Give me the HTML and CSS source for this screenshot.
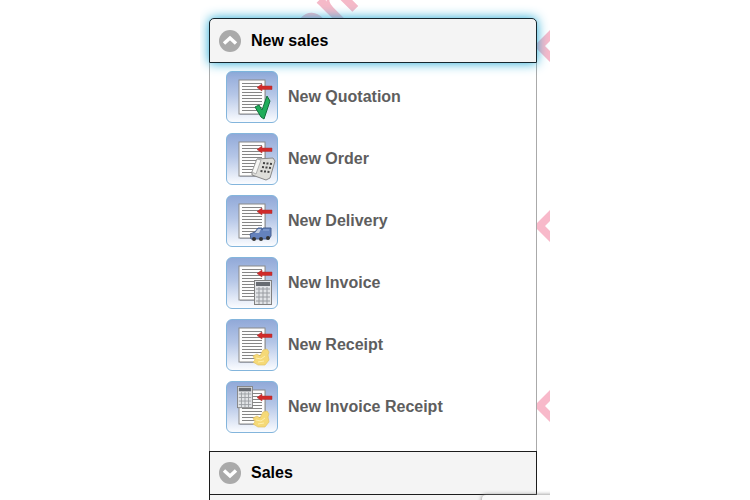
FILE: index.html
```html
<!DOCTYPE html>
<html lang="en">
  <head>
    <meta charset="UTF-8" />
    <meta name="viewport" content="width=device-width, initial-scale=1.0" />
    <title>New sales</title>
    <link rel="stylesheet" href="styles.css">
  </head>
  <body>
    <!-- shared icon parts -->
    <svg class="defs" aria-hidden="true">
      <defs>
        <symbol id="page" viewBox="0 0 50 50">
          <rect x="13" y="9" width="26" height="34" fill="#a9b3c6" />
          <rect x="12" y="8" width="26" height="34" fill="#fdfdfd" stroke="#8a8a8a" stroke-width="1" />
          <path d="M15 11.500H35M15 14.500H35M15 17.500H35M15 20.500H35M15 23.500H35M15 26.500H35M15 29.500H35M15 32.500H35M15 35.500H35M15 38.500H35" stroke="#858585" stroke-width="1" />
        </symbol>
        <symbol id="arrow" viewBox="0 0 50 50">
          <path d="M30 15.500L35 12V14H45V17.500H35V19Z" fill="#d12a2a" stroke="#a33" stroke-width=".5" />
        </symbol>
        <symbol id="calc" viewBox="0 0 18 26">
          <rect x=".5" y=".5" width="17" height="24" fill="#e2e4e7" stroke="#808080" />
          <rect x="2" y="2" width="14" height="4" fill="#686c72" />
          <path d="M2 9H16M2 13H16M2 17H16M2 21H16M5 7V24M9 7V24M13 7V24" stroke="#999ca1" stroke-width="1" />
        </symbol>
        <symbol id="hand" viewBox="0 0 18 18">
          <path d="M1 8L5 6L8 8L11 2L15 1L17 4L16 7L17 12L13 17H6L1 14L3 12Z" fill="#f5d977" stroke="#e4c468" stroke-width=".7" />
          <path d="M4 10L9 11L13 8M6 14L12 13" fill="none" stroke="#fff0ae" stroke-width="1" />
        </symbol>
      </defs>
    </svg>

    <div class="page">
      <span class="watermark" aria-hidden="true">om</span>
      <svg class="mark mark1" viewBox="0 0 14 32" aria-hidden="true"><path d="M14 0V11L9 16L14 21V32L0 18V14Z" /></svg>
      <svg class="mark mark2" viewBox="0 0 14 32" aria-hidden="true"><path d="M14 0V11L9 16L14 21V32L0 18V14Z" /></svg>
      <svg class="mark mark3" viewBox="0 0 14 32" aria-hidden="true"><path d="M14 0V11L9 16L14 21V32L0 18V14Z" /></svg>

      <div class="menu">
        <button class="header active" type="button" aria-expanded="true">
          <svg class="chevron" viewBox="0 0 22 22"><circle cx="11" cy="11" r="11" /><path d="M5 13.500L11 8L17 13.500" /></svg>
          New sales
        </button>

        <div class="content">
          <a class="item" href="#">
            <svg class="icon" viewBox="0 0 50 50">
              <use href="#page" /><use href="#arrow" />
              <path d="M28 35L32 33L35 38L40 24L43 29L41 35L37 47L34 45Z" fill="#20ad5b" stroke="#13713c" stroke-width="1" />
            </svg>
            New Quotation
          </a>
          <a class="item" href="#">
            <svg class="icon" viewBox="0 0 50 50">
              <use href="#page" /><use href="#arrow" />
              <path d="M30 25L46 24L48 27L43 44L39 46L25 41V38Z" fill="#dededa" stroke="#888" stroke-width="1" />
              <path d="M30 25L34 26L29 40L25 38Z" fill="#f7f7f5" stroke="#999" stroke-width=".7" />
              <path d="M36 29L45 30M35 33L44 34M33.500 37L42.500 38" stroke="#444" stroke-width="2" stroke-dasharray="2 1.500" />
            </svg>
            New Order
          </a>
          <a class="item" href="#">
            <svg class="icon" viewBox="0 0 50 50">
              <use href="#page" /><use href="#arrow" />
              <path d="M23 38L28 36L31 32H35V34L36 32L44 32V40L42 43H24Z" fill="#6482bd" stroke="#455e90" stroke-width="1" />
              <path d="M28 37L31 33H34L32 37Z" fill="#c0cce1" />
              <path d="M36 34H42" stroke="#91a9d8" stroke-width="1" />
              <circle cx="27" cy="43" r="2" fill="#333" /><circle cx="34" cy="43" r="2" fill="#333" /><circle cx="41" cy="42" r="2" fill="#333" />
            </svg>
            New Delivery
          </a>
          <a class="item" href="#">
            <svg class="icon" viewBox="0 0 50 50">
              <use href="#page" /><use href="#arrow" />
              <use href="#calc" x="27" y="22" width="18" height="26" />
            </svg>
            New Invoice
          </a>
          <a class="item" href="#">
            <svg class="icon" viewBox="0 0 50 50">
              <use href="#page" /><use href="#arrow" />
              <use href="#hand" x="25" y="28" width="18" height="18" />
            </svg>
            New Receipt
          </a>
          <a class="item" href="#">
            <svg class="icon" viewBox="0 0 50 50">
              <use href="#page" /><use href="#arrow" />
              <use href="#calc" x="10" y="4" width="16" height="23" />
              <use href="#hand" x="25" y="28" width="18" height="18" />
            </svg>
            New Invoice Receipt
          </a>
        </div>

        <button class="header" type="button" aria-expanded="false">
          <svg class="chevron" viewBox="0 0 22 22"><circle cx="11" cy="11" r="11" /><path d="M5 8.500L11 14L17 8.500" /></svg>
          Sales
        </button>
        <div class="header next"></div>
      </div>
      <div class="popup"></div>
    </div>
  </body>
</html>
```

FILE: styles.css
```css
* {
  box-sizing: border-box;
}
body {
  margin: 0;
  background: white;
  font-family: "Liberation Sans", Arial, sans-serif;
  font-size: 16px;
  font-weight: bold;
}
.defs {
  position: absolute;
  width: 0;
  height: 0;
}
.page {
  position: relative;
  max-width: 350px;
  height: 100vh;
  margin: 0 auto;
  padding: 18px 13px 0 9px;
  overflow: hidden;
}
.menu {
  position: relative;
}
.header {
  display: flex;
  align-items: center;
  gap: 10px;
  width: 100%;
  height: 44px;
  padding: 0 9px;
  border: 1px solid #1c1c1c;
  background: #f4f4f4;
  color: black;
  font: inherit;
  text-align: left;
}
.header.active {
  position: relative;
  height: 45px;
  border-color: #14262e;
  border-radius: 5px 5px 0 0;
  box-shadow: 0 0 12px #1ea8d4;
}
.header.next {
  margin-top: -1px;
}
.chevron {
  width: 22px;
  height: 22px;
  fill: #aaa;
}
.chevron path {
  fill: none;
  stroke: white;
  stroke-width: 3.5;
}
.content {
  display: flex;
  flex-direction: column;
  gap: 10px;
  padding: 8px 16px 18px;
  border: 1px solid #aaa;
  border-width: 0 1px;
  background: white;
}
.item {
  display: flex;
  align-items: center;
  gap: 10px;
  color: #5e5e5e;
  line-height: 20px;
  text-decoration: none;
}
.icon {
  width: 52px;
  height: 52px;
  border: 1px solid #83b5dc;
  border-radius: 6px;
  background: linear-gradient(#91a9d8, #b5c6e7 45%, #fafcff);
}

/* background watermark */
.watermark {
  position: absolute;
  top: -22px;
  left: 83px;
  color: #f5b9c8;
  font-size: 60px;
  line-height: 60px;
  transform: rotate(-45deg);
}
.mark {
  position: absolute;
  right: 0;
  width: 14px;
  height: 32px;
  fill: #f8b9ca;
}
.mark1 {
  top: 30px;
}
.mark2 {
  top: 210px;
}
.mark3 {
  top: 390px;
}
.popup {
  position: absolute;
  right: -8px;
  bottom: -15px;
  width: 76px;
  height: 20px;
  border-radius: 4px;
  background: #f9f9f9;
  box-shadow: 0 0 4px #777;
}
```
